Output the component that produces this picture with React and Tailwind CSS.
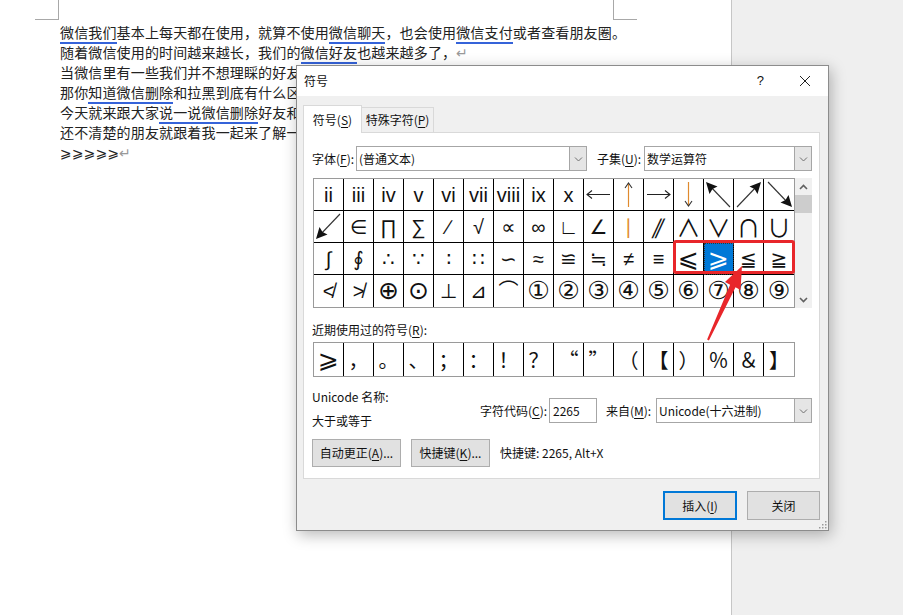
import React from "react";

const CJK = '"Noto Sans CJK SC", "Noto Sans", sans-serif';
const SYM = '"Liberation Sans", "DejaVu Sans", "Noto Sans CJK SC", sans-serif';

const rows = [
  ["ii", "iii", "iv", "v", "vi", "vii", "viii", "ix", "x", "←", "↑", "→", "↓", "↖", "↗", "↘"],
  ["↙", "∈", "∏", "∑", "∕", "√", "∝", "∞", "∟", "∠", "∣", "∥", "∧", "∨", "∩", "∪"],
  ["∫", "∮", "∴", "∵", "∶", "∷", "∽", "≈", "≌", "≒", "≠", "≡", "⩽", "⩾", "≦", "≧"],
  ["≮", "≯", "⊕", "⊙", "⊥", "⊿", "⌒", "①", "②", "③", "④", "⑤", "⑥", "⑦", "⑧", "⑨"],
];

const recent = ["⩾", "，", "。", "、", "；", "：", "！", "？", "“", "”", "（", "【", "）", "％", "＆", "】"];

const big = ["①", "②", "③", "④", "⑤", "⑥", "⑦", "⑧", "⑨", "⊕", "⊙", "⩽", "⩾"];
const logic = ["∧", "∨", "∩", "∪"];

const K = ({ c }) => <span className="underline underline-offset-2">{c}</span>;

const Link = ({ children }) => (
  <span className="border-b-2 border-[#3563d9]">{children}</span>
);

// straight arrows drawn pointing right / up, mirrored for the others
const HArrow = ({ flip }) => (
  <svg width="29" height="31" viewBox="0 0 29 31" className={flip ? "-scale-x-100" : ""}>
    <path d="M3 15.5 H26 M21 11.5 L26 15.5 L21 19.5" fill="none" stroke="#222" strokeWidth="1.1" />
  </svg>
);

const VArrow = ({ flip }) => (
  <svg width="29" height="31" viewBox="0 0 29 31" className={flip ? "-scale-y-100" : ""}>
    <path d="M14.5 28 V4" stroke="#e08a2e" strokeWidth="1.2" />
    <path d="M11 9 L14.5 4 L18 9" fill="none" stroke="#333" strokeWidth="1.1" />
  </svg>
);

const DArrow = ({ cls }) => (
  <svg width="29" height="31" viewBox="0 0 29 31" className={cls}>
    <path d="M3 28 L24 6" stroke="#333" strokeWidth="1.1" />
    <polygon points="27,3 23.5,15 20.5,10 15.5,7.5" fill="#111" />
  </svg>
);

const arrows = {
  "→": <HArrow />,
  "←": <HArrow flip />,
  "↑": <VArrow />,
  "↓": <VArrow flip />,
  "↗": <DArrow cls="" />,
  "↖": <DArrow cls="-scale-x-100" />,
  "↘": <DArrow cls="-scale-y-100" />,
  "↙": <DArrow cls="-scale-x-100 -scale-y-100" />,
};

const Chevron = ({ up }) => (
  <svg width="9" height="6" viewBox="0 0 9 6">
    <path
      d={up ? "M1 5 L4.5 1.5 L8 5" : "M1 1.5 L4.5 5 L8 1.5"}
      fill="none"
      stroke={up ? "#606060" : "#707070"}
      strokeWidth={up ? 1.6 : 1}
    />
  </svg>
);

const Select = ({ value, width }) => (
  <div className={`flex h-[25px] border border-[#a6a6a6] bg-white ${width}`}>
    <div className="flex-1 pl-[2px] flex items-center text-[12px] text-[#111]">{value}</div>
    <div className="w-[17px] bg-[#e5e5e5] border-l border-[#a6a6a6] flex items-center justify-center">
      <Chevron />
    </div>
  </div>
);

const Button = ({ children, width, primary }) => (
  <div
    className={`flex items-center justify-center bg-[#e1e1e1] text-[12px] text-[#111] ${width} ${
      primary ? "border-2 border-[#0078d7]" : "border border-[#adadad]"
    }`}
  >
    {children}
  </div>
);

const Cell = ({ ch, r, c }) => {
  const sel = r === 2 && c === 13;
  let size = "text-[20px]";
  if (big.includes(ch)) size = "text-[25px]";
  if (logic.includes(ch)) size = "text-[24px]";
  return (
    <div
      className={`h-[32px] flex items-center justify-center border-black ${c < 15 ? "border-r" : ""} ${
        r < 3 ? "border-b" : ""
      } ${sel ? "bg-[#0078d7] text-white outline-1 outline-dotted outline-[#333] -outline-offset-1" : ""} ${
        ch === "∣" ? "text-[#e08a2e]" : ""
      } ${size}`}
      style={logic.includes(ch) ? { fontFamily: CJK } : undefined}
    >
      {arrows[ch] ? arrows[ch] : <span className={ch === "∥" ? "-skew-x-[25deg] inline-block" : ""}>{ch}</span>}
    </div>
  );
};

export default function App() {
  return (
    <div
      className="relative w-[903px] h-[615px] flex overflow-hidden bg-white"
      style={{ fontFamily: CJK }}
    >
      {/* document page */}
      <div className="w-[731px] h-full bg-white">
        <div className="flex h-[20px]">
          <div className="ml-[35px] w-[24px] h-[20px] border-r border-b border-[#a8a8a8]" />
          <div className="ml-[554px] w-[24px] h-[20px] border-l border-b border-[#a8a8a8]" />
        </div>
        <div className="pl-[60px] mt-[2px] text-[14px] leading-[20px] text-[#222] whitespace-nowrap tracking-[0.15px]">
          <div>
            <Link>微信我们</Link>基本上每天都在使用，就算不使用<Link>微信聊天</Link>，也会使用
            <Link>微信支付</Link>或者查看朋友圈。
          </div>
          <div>
            随着微信使用的时间越来越长，我们的<Link>微信好友</Link>也越来越多了，
            <span className="text-[#999]">↵</span>
          </div>
          <div>当微信里有一些我们并不想理睬的好友时，我们就会选择删除或者拉黑。</div>
          <div>
            那你<Link>知道微信删除</Link>和拉黑到底有什么区别吗？
          </div>
          <div>
            今天就来跟大家<Link>说一说微信删除</Link>好友和拉黑好友的区别。
          </div>
          <div>还不清楚的朋友就跟着我一起来了解一下吧。</div>
          <div>
            <span style={{ fontFamily: SYM }}>⩾⩾⩾⩾⩾</span>
            <span className="text-[#999]">↵</span>
          </div>
        </div>
      </div>
      <div className="flex-1 bg-[#efefef] border-l border-[#c6c6c6]" />

      {/* symbol dialog */}
      <div className="absolute left-[296px] top-[65px] w-[533px] h-[466px] flex flex-col border border-[#8c8c8c] bg-[#f0f0f0] shadow-[2px_4px_14px_rgba(0,0,0,0.28)]">
        <div className="h-[30px] bg-white flex items-center pl-[7px] text-[12px] text-[#111]">
          <span>符号</span>
          <span className="ml-auto mr-[35px] text-[13px]" style={{ fontFamily: SYM }}>?</span>
          <svg width="12" height="12" viewBox="0 0 12 12" className="mr-[17px]">
            <path d="M1 1 L11 11 M11 1 L1 11" stroke="#222" strokeWidth="1" />
          </svg>
        </div>

        <div className="flex-1 flex flex-col px-[6px] pt-[9px] relative">
          <div className="flex items-start text-[12px] text-[#111]">
            <div className="relative z-10 -mb-px w-[59px] h-[28px] bg-white border border-b-0 border-[#d9d9d9] flex items-center justify-center">
              符号(<K c="S" />)
            </div>
            <div className="mt-[2px] w-[72px] h-[25px] border border-l-0 border-b-0 border-[#d9d9d9] flex items-center justify-center">
              特殊字符(<K c="P" />)
            </div>
          </div>

          <div className="w-[517px] h-[347px] bg-white border border-[#d9d9d9] pl-[8px] pt-[13px] flex flex-col text-[12px] text-[#111]">
            <div className="flex items-center h-[25px]">
              <span className="w-[44px]">字体(<K c="F" />):</span>
              <Select value="(普通文本)" width="w-[231px]" />
              <span className="ml-[10px] w-[47px]">子集(<K c="U" />):</span>
              <Select value="数学运算符" width="w-[168px]" />
            </div>

            <div className="flex mt-[7px] ml-[1px]">
              <div className="border border-[#9a9a9a] grid grid-cols-[repeat(16,30px)]" style={{ fontFamily: SYM }}>
                {rows.map((row, r) => row.map((ch, c) => <Cell key={`${r}-${c}`} ch={ch} r={r} c={c} />))}
              </div>
              <div className="w-[17px] h-[130px] bg-[#f0f0f0] flex flex-col">
                <div className="h-[17px] flex items-center justify-center">
                  <Chevron up />
                </div>
                <div className="h-[18px] bg-[#cdcdcd]" />
                <div className="flex-1" />
                <div className="h-[17px] flex items-center justify-center">
                  <svg width="9" height="6" viewBox="0 0 9 6">
                    <path d="M1 1 L4.5 4.5 L8 1" fill="none" stroke="#606060" strokeWidth="1.6" />
                  </svg>
                </div>
              </div>
            </div>

            <div className="mt-[14px] leading-[16px]">
              近期使用过的符号(<K c="R" />):
            </div>
            <div className="mt-[4px] ml-[1px] w-[482px] h-[35px] border border-[#9a9a9a] flex" style={{ fontFamily: CJK }}>
              {recent.map((ch, i) => (
                <div
                  key={i}
                  className={`w-[30px] flex items-center justify-center ${i === 0 ? "text-[25px]" : "text-[20px]"} ${
                    i < 15 ? "border-r border-black" : ""
                  }`}
                  style={i === 0 ? { fontFamily: SYM } : undefined}
                >
                  {ch}
                </div>
              ))}
            </div>

            <div className="flex mt-[8px]">
              <div className="w-[168px] leading-[24px]">
                <div>Unicode 名称:</div>
                <div>大于或等于</div>
              </div>
              <div className="flex items-center h-[25px] mt-[13px]">
                <span className="w-[69px]">字符代码(<K c="C" />):</span>
                <div className="w-[48px] h-[25px] border border-[#a6a6a6] pl-[3px] flex items-center">2265</div>
                <span className="ml-[9px] w-[50px]">来自(<K c="M" />):</span>
                <Select value="Unicode(十六进制)" width="w-[156px]" />
              </div>
            </div>

            <div className="flex items-center mt-[6px] h-[28px]">
              <Button width="w-[89px] h-[28px]">
                自动更正(<K c="A" />)...
              </Button>
              <div className="ml-[10px]">
                <Button width="w-[79px] h-[28px]">
                  快捷键(<K c="K" />)...
                </Button>
              </div>
              <span className="ml-[10px]">快捷键: 2265, Alt+X</span>
            </div>
          </div>

          <div className="flex justify-end gap-[10px] mt-[12px] w-[517px]">
            <Button width="w-[74px] h-[29px]" primary>
              插入(<K c="I" />)
            </Button>
            <Button width="w-[73px] h-[29px]">关闭</Button>
          </div>

          <svg width="10" height="10" viewBox="0 0 10 10" className="absolute right-[1px] bottom-[1px]">
            <g fill="#9a9a9a">
              <rect x="8" y="2" width="1.5" height="1.5" />
              <rect x="5" y="5" width="1.5" height="1.5" />
              <rect x="8" y="5" width="1.5" height="1.5" />
              <rect x="2" y="8" width="1.5" height="1.5" />
              <rect x="5" y="8" width="1.5" height="1.5" />
              <rect x="8" y="8" width="1.5" height="1.5" />
            </g>
          </svg>
        </div>
      </div>

      {/* annotation: red box and arrow */}
      <div className="absolute left-[673px] top-[240px] w-[122px] h-[34px] border-[3px] border-[#e8262a] rounded-[3px]" />
      <svg className="absolute left-0 top-0 pointer-events-none" width="903" height="615">
        <polygon
          points="742,266 740.5,290 735.5,287.3 708.9,340.4 707.1,339.6 730.1,284.7 725,282"
          fill="#e8262a"
        />
      </svg>
    </div>
  );
}
